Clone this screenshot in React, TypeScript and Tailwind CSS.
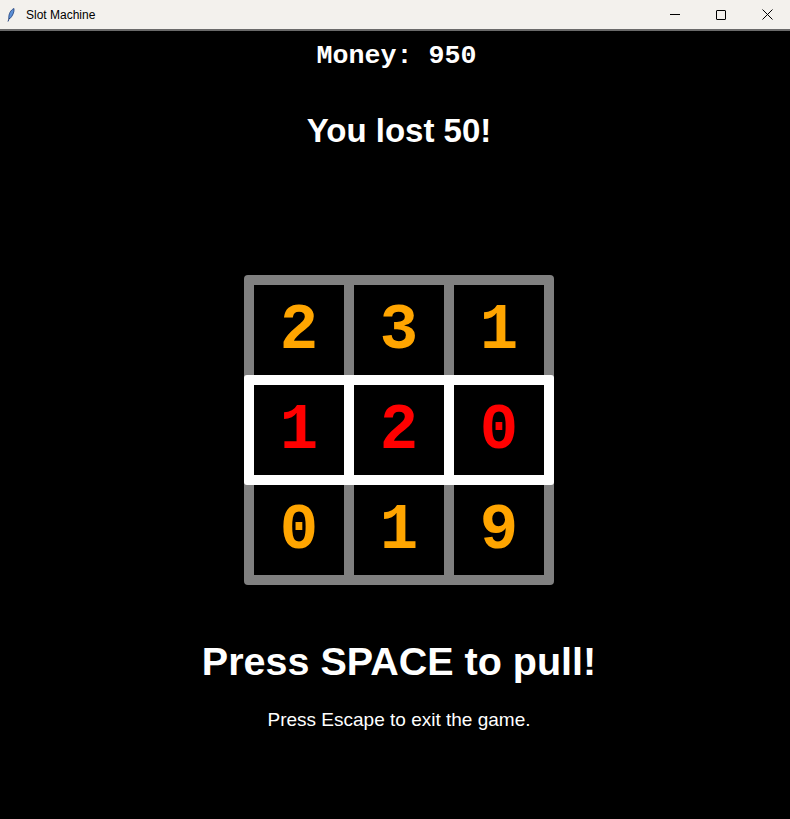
import React from 'react';

const rows = [
  ['2', '3', '1'],
  ['1', '2', '0'],
  ['0', '1', '9'],
];

function Cell({ value, hit }: { value: string; hit?: boolean }) {
  return (
    <div
      className={`flex h-[90px] w-[90px] items-center justify-center bg-black font-['Liberation_Mono',monospace] text-[64px] font-bold leading-none ${
        hit ? 'text-[#ff0000]' : 'text-[#ffa500]'
      }`}
    >
      <span className="mt-[2px]">{value}</span>
    </div>
  );
}

function TitleBar() {
  return (
    <div className="flex h-[29px] items-center bg-[#f3f1ed] font-['Liberation_Sans',sans-serif] text-[12px] text-black">
      <svg className="ml-[7px] h-[14px] w-[8px]" viewBox="0 0 8 14">
        <path d="M7 0.5 C3.5 2 1.5 6 1.8 10.5 L3 10.5 C5.5 8 7.5 4 7 0.5 Z" fill="#5b8fd6" stroke="#1f3f7a" strokeWidth="0.8" />
        <path d="M2.3 10 L1 13.5" stroke="#1f3f7a" strokeWidth="1" />
      </svg>
      <span className="ml-[11px]">Slot Machine</span>
      <div className="ml-auto flex h-full items-center">
        <div className="flex h-full w-[46px] items-center justify-center">
          <div className="h-px w-[10px] bg-black" />
        </div>
        <div className="flex h-full w-[46px] items-center justify-center">
          <div className="h-[10px] w-[10px] rounded-[1px] border border-black" />
        </div>
        <div className="flex h-full w-[46px] items-center justify-center">
          <svg width="11" height="11" viewBox="0 0 11 11">
            <path d="M0.5 0.5 L10.5 10.5 M10.5 0.5 L0.5 10.5" stroke="black" strokeWidth="1" />
          </svg>
        </div>
      </div>
    </div>
  );
}

export default function App() {
  return (
    <div className="flex h-[819px] w-[790px] flex-col overflow-hidden bg-black">
      <TitleBar />
      <div className="h-[2px] bg-[#6a6a6a]" />

      <div className="flex flex-col items-center pl-[8px] text-white">
        <div className="-ml-[5px] mt-[12px] font-['Liberation_Mono',monospace] text-[26.67px] font-bold leading-none">
          Money: 950
        </div>
        <div className="mt-[44.7px] font-['Liberation_Sans',sans-serif] text-[33px] font-bold leading-none">
          You lost 50!
        </div>

        <div className="mt-[127.6px] w-[310px] rounded-[4px] bg-[#808080]">
          <div className="flex gap-[10px] px-[10px] pt-[10px]">
            {rows[0].map((v, i) => (
              <Cell key={i} value={v} />
            ))}
          </div>
          <div className="flex gap-[10px] rounded-[3px] bg-white p-[10px]">
            {rows[1].map((v, i) => (
              <Cell key={i} value={v} hit />
            ))}
          </div>
          <div className="flex gap-[10px] px-[10px] pb-[10px]">
            {rows[2].map((v, i) => (
              <Cell key={i} value={v} />
            ))}
          </div>
        </div>

        <div className="mt-[57px] font-['Liberation_Sans',sans-serif] text-[39.5px] font-bold leading-none">
          Press SPACE to pull!
        </div>
        <div className="mt-[29px] font-['Liberation_Sans',sans-serif] text-[19px] leading-none">
          Press Escape to exit the game.
        </div>
      </div>
    </div>
  );
}
